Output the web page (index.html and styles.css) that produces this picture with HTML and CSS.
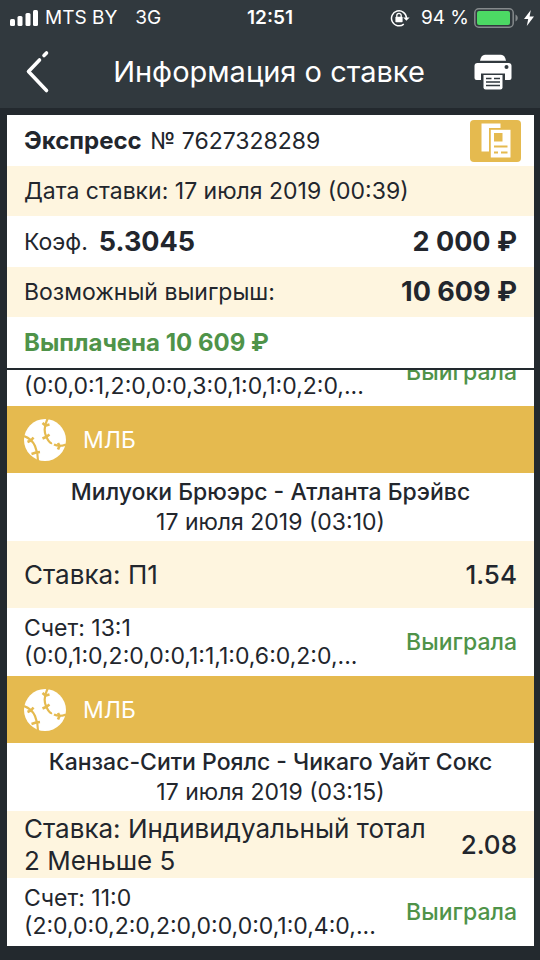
FILE: index.html
```html
<!DOCTYPE html>
<html lang="ru">
<head>
<meta charset="utf-8">
<meta name="viewport" content="width=device-width, initial-scale=1">
<title>Информация о ставке</title>
<link rel="stylesheet" href="styles.css">
</head>
<body>
<header class="top">
  <div class="status">
    <div class="status-left">
      <svg class="signal" viewBox="0 0 28 18" aria-hidden="true"><rect x="0" y="10" width="5" height="7" rx="1.5"/><rect x="7.5" y="7" width="5" height="10" rx="1.5"/><rect x="15.5" y="4" width="5" height="13" rx="1.5"/><rect x="23" y="1" width="5" height="16" rx="1.5"/></svg>
      <span>MTS BY</span>
      <span class="network">3G</span>
    </div>
    <time class="clock">12:51</time>
    <div class="status-right">
      <svg class="lock" viewBox="0 0 20 18" aria-hidden="true"><path d="M13.8 15.1A7.5 7.5 0 1 1 16.5 9" fill="none" stroke="#fff" stroke-width="1.5"/><path d="M13.2 8.4h6.4l-3.2 3.4z" fill="#fff"/><rect x="5.4" y="7.8" width="7.2" height="5.4" rx=".6" fill="#fff"/><path d="M6.8 8V6.6a2.2 2.2 0 0 1 4.4 0V8" fill="none" stroke="#fff" stroke-width="1.3"/></svg>
      <span>94 %</span>
      <svg class="battery" viewBox="0 0 45 20" aria-hidden="true"><rect x=".8" y=".8" width="38.4" height="18.4" rx="4" fill="none" stroke="#858a8c" stroke-width="1.5"/><rect x="3" y="3" width="33" height="14" rx="2" fill="#4cd964"/><path d="M41.5 6.5c3 1.5 3 5.500 0 7z" fill="#858a8c"/></svg>
      <svg class="bolt" viewBox="0 0 10 16" aria-hidden="true"><path d="M6.8 0 0 9h4.2L2.8 16 10 6.500H5.600z" fill="#fff"/></svg>
    </div>
  </div>
  <div class="nav">
    <button class="nav-button back" type="button" aria-label="Назад">
      <svg viewBox="0 0 24 44" aria-hidden="true"><path d="M20.500 3 18 5.500M13.500 10 2.500 21.500l18 19" fill="none" stroke="#fff" stroke-width="3.600" stroke-linecap="round" stroke-linejoin="round"/></svg>
    </button>
    <h1>Информация о ставке</h1>
    <button class="nav-button print" type="button" aria-label="Печать">
      <svg viewBox="0 0 38 36" aria-hidden="true"><path d="M6 6.800Q7 .8 11 .8h16q4 0 5 6z" fill="#fff"/><path d="M3.500 9h31q3 0 3 3v12q0 2-2 2H2.500q-2 0-2-2V12q0-3 3-3z" fill="#fff"/><circle cx="32.500" cy="13" r="2" fill="#31393e"/><path d="M7 19.500h24V36H7z" fill="#31393e"/><path d="M9.500 21h19v12.500q0 2-2 2h-15q-2 0-2-2z" fill="#fff"/><path d="M12 24.500h5.500M20 24.500h6M12 28h14M12 31.500h14" stroke="#31393e" stroke-width="1.400"/></svg>
    </button>
  </div>
</header>

<main class="ticket">
  <section class="summary">
    <div class="row title">
      <div><b>Экспресс</b> <span class="number">№ 7627328289</span></div>
      <button class="copy" type="button" aria-label="Копировать">
        <svg viewBox="0 0 30 36" aria-hidden="true"><path d="M.5.5h19v28H.5z" fill="#fff"/><path d="M8 5h24v31H8z" fill="#e5ba4f"/><path d="M9.800 6.800h19.700V34.500H9.800z" fill="#fff"/><path d="M13 10h8.500v8.500H13zM13 22.500h13.500v2H13zM13 28.500h4v2h-4zM20 28.500h6.500v2H20z" fill="#e5ba4f"/></svg>
      </button>
    </div>
    <div class="row tint">Дата ставки: 17 июля 2019 (00:39)</div>
    <div class="row"><div class="rate">Коэф. <b class="figure">5.3045</b></div><b class="figure">2 000 ₽</b></div>
    <div class="row tint"><span>Возможный выигрыш:</span><b class="figure">10 609 ₽</b></div>
    <div class="row paid">Выплачена 10 609 ₽</div>
  </section>

  <section class="events">
    <article>
      <div class="result"><div class="score">(0:0,0:1,2:0,0:0,3:0,1:0,1:0,2:0,...</div><span class="won">Выиграла</span></div>
    </article>
    <article>
      <h2 class="league"><svg class="ball" viewBox="0 0 42 42" aria-hidden="true"><use href="#baseball"/></svg>МЛБ</h2>
      <div class="match"><h3>Милуоки Брюэрс - Атланта Брэйвс</h3><time>17 июля 2019 (03:10)</time></div>
      <div class="bet"><span class="pick">Ставка: П1</span><span class="odds">1.54</span></div>
      <div class="result"><div class="score">Счет: 13:1<br>(0:0,1:0,2:0,0:0,1:1,1:0,6:0,2:0,...</div><span class="won">Выиграла</span></div>
    </article>
    <article>
      <h2 class="league"><svg class="ball" viewBox="0 0 42 42" aria-hidden="true"><use href="#baseball"/></svg>МЛБ</h2>
      <div class="match"><h3>Канзас-Сити Роялс - Чикаго Уайт Сокс</h3><time>17 июля 2019 (03:15)</time></div>
      <div class="bet"><span class="pick">Ставка: Индивидуальный тотал 2 Меньше 5</span><span class="odds">2.08</span></div>
      <div class="result"><div class="score">Счет: 11:0<br>(2:0,0:0,2:0,2:0,0:0,0:0,1:0,4:0,...</div><span class="won">Выиграла</span></div>
    </article>
  </section>
</main>

<svg class="defs" aria-hidden="true">
  <symbol id="baseball" viewBox="0 0 42 42">
    <circle cx="21" cy="21" r="21" fill="#fff"/>
    <g fill="none" stroke="#e5ba4f" stroke-width="2.200">
      <path d="M24 -1Q18.500 9 22 17T28 24M30 25.500Q35 28 42 25.500"/>
      <path d="M0 17Q8 20 11 27T14 42"/>
      <path d="M18.500 4 21.500 6.500 25.500 5.500M18.500 19.500 22 18 25.500 15.500M34 30.500 35.500 27 34 24M3.500 23 7 21.500 9.500 18.500M7.500 35 12 33.500 16 33" stroke-width="2.600"/>
    </g>
  </symbol>
</svg>
</body>
</html>
```

FILE: styles.css
```css
* {
  box-sizing: border-box;
}

body {
  display: flex;
  flex-direction: column;
  height: 100vh;
  margin: 0;
  background: #23292e;
  color: #22262d;
  font: 23px/28px Inter, "Liberation Sans", sans-serif;
}

button {
  padding: 0;
  border: 0;
  background: none;
}

h1,
h2,
h3 {
  margin: 0;
  font-weight: 400;
}

svg {
  display: block;
}

.defs {
  position: absolute;
  width: 0;
  height: 0;
}

.top {
  flex: none;
  background: #31393e;
  color: #fff;
}

.status {
  display: grid;
  grid-template-columns: 1fr auto 1fr;
  align-items: center;
  height: 36px;
  padding: 0 6px 0 10px;
  font-size: 19px;
}

.status-left,
.status-right {
  display: flex;
  align-items: center;
}

.status-right {
  justify-content: flex-end;
}

.signal {
  width: 28px;
  height: 18px;
  margin-right: 7px;
  fill: #fff;
}

.network {
  margin-left: 18px;
}

.clock {
  margin-right: -4px;
  margin-left: -4px;
  padding-right: 4px;
  font-weight: 600;
}

.lock {
  width: 20px;
  height: 18px;
  margin-right: 11px;
}

.battery {
  width: 45px;
  height: 20px;
  margin: 0 5px;
}

.bolt {
  width: 10px;
  height: 16px;
}

.nav {
  display: flex;
  align-items: center;
  justify-content: space-between;
  height: 72px;
  padding: 0 28px 0 26px;
}

.nav h1 {
  font-size: 29px;
  line-height: 36px;
}

.nav-button {
  display: flex;
  align-items: center;
  width: 40px;
  height: 72px;
}

.back svg {
  width: 24px;
  height: 44px;
}

.print {
  justify-content: flex-end;
}

.print svg {
  width: 38px;
  height: 36px;
}

.ticket {
  display: flex;
  flex: 1;
  flex-direction: column;
  min-height: 0;
  margin: 7px 6px 14px 7px;
  background: #fff;
}

.summary {
  flex: none;
  border-bottom: 2px solid #22292e;
}

.row {
  display: flex;
  align-items: center;
  justify-content: space-between;
  height: 51px;
  padding: 0 17px;
}

.row.tint {
  height: 50px;
}

.row b {
  font-weight: 700;
}

.title b,
.row.paid {
  font-size: 24px;
}

.number {
  margin-left: 2px;
}

.tint,
.bet {
  background: #fef5df;
}

.row .figure {
  font-size: 27px;
}

.rate {
  display: flex;
  align-items: center;
  gap: 11px;
}

.paid {
  color: #4f9349;
  font-weight: 700;
}

.copy {
  display: flex;
  align-items: center;
  justify-content: center;
  width: 51px;
  height: 42px;
  margin-right: -4px;
  border-radius: 4px;
  background: #e5ba4f;
}

.copy svg {
  width: 30px;
  height: 36px;
}

.events {
  display: flex;
  flex: 1;
  flex-direction: column;
  justify-content: flex-end;
  min-height: 0;
  overflow: hidden;
}

.league {
  display: flex;
  align-items: center;
  gap: 17px;
  height: 67px;
  padding: 0 17px;
  background: #e5ba4f;
  color: #fff;
  font-size: 23px;
}

.ball {
  width: 42px;
  height: 42px;
}

.match {
  display: flex;
  flex-direction: column;
  align-items: center;
  justify-content: center;
  height: 68px;
  line-height: 30px;
}

.match h3 {
  font-size: 23px;
  font-weight: 500;
}

.bet,
.result {
  display: flex;
  align-items: center;
  justify-content: space-between;
  padding: 0 17px;
}

.bet {
  height: 67px;
  font-size: 26px;
  line-height: 32px;
}

.pick {
  max-width: 420px;
}

.odds {
  font-weight: 500;
}

.result {
  height: 68px;
}

.result .score:not(:has(br)) {
  align-self: flex-end;
  padding-bottom: 6px;
}

.won {
  color: #4f9349;
  font-weight: 500;
}
```
